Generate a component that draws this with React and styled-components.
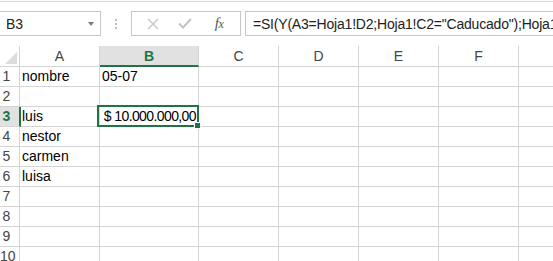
import React from "react";
import styled, { createGlobalStyle } from "styled-components";

const GRID = "#d4d4d4";
const GREEN = "#217346";
const BOX = "#c6c6c6";

const Global = createGlobalStyle`
  html, body { margin: 0; padding: 0; background: #fff; }
  body { font-family: "Liberation Sans", Arial, sans-serif; overflow: hidden; }
`;

const Window = styled.div`
  width: 553px;
  height: 261px;
  overflow: hidden;
  padding-top: 1px;
  box-sizing: border-box;
  background: #fff;
`;

const FormulaBar = styled.div`
  display: flex;
  align-items: stretch;
  border-top: 1px solid #d5d5d5;
  padding-top: 9px;
  height: 25px;
`;

const NameBox = styled.div`
  width: 101px;
  box-sizing: border-box;
  border: 1px solid ${BOX};
  border-left: none;
  display: flex;
  align-items: center;
  justify-content: space-between;
  padding: 0 6px 0 6px;
  font-size: 14px;
  color: #222;
`;

const Caret = styled.span`
  width: 0;
  height: 0;
  border-left: 3.5px solid transparent;
  border-right: 3.5px solid transparent;
  border-top: 4px solid #7a7a7a;
  margin-top: 1px;
`;

const Grip = styled.div`
  width: 30px;
  display: flex;
  flex-direction: column;
  align-items: center;
  justify-content: center;
  gap: 2px;
`;

const Dot = styled.span`
  width: 2px;
  height: 2px;
  background: #b8b8b8;
`;

const ButtonGroup = styled.div`
  width: 110px;
  box-sizing: border-box;
  border: 1px solid ${BOX};
  display: flex;
  align-items: center;
  padding-left: 14px;
  gap: 19px;
`;

const IconSlot = styled.span`
  display: flex;
  align-items: center;
  justify-content: center;
  width: ${(p) => p.$w || 13}px;
  height: 14px;
`;

const Fx = styled.span`
  font-family: "Liberation Serif", "Times New Roman", serif;
  font-style: italic;
  color: #555;
  font-size: 15px;
  letter-spacing: -0.5px;
  line-height: 1;
  sub {
    font-size: 12px;
    vertical-align: baseline;
  }
`;

const FormulaInput = styled.div`
  flex: 1;
  margin-left: 4px;
  border: 1px solid ${BOX};
  border-right: none;
  display: flex;
  align-items: center;
  padding-left: 7px;
  font-size: 14px;
  letter-spacing: -0.2px;
  color: #222;
  white-space: nowrap;
  overflow: hidden;
`;

const Sheet = styled.div`
  margin-top: 10px;
  display: grid;
  grid-template-columns: 20px 80px 99px 80px 80px 80px 80px 80px;
  grid-template-rows: 21px repeat(10, 20px);
  width: max-content;
`;

const Corner = styled.div`
  box-sizing: border-box;
  border-right: 1px solid ${GRID};
  border-bottom: 1px solid ${GRID};
  display: flex;
  align-items: flex-end;
  justify-content: flex-end;
  padding: 0 2px 2px 0;
`;

const ColHead = styled.div`
  box-sizing: border-box;
  border-right: 1px solid ${GRID};
  border-bottom: ${(p) => (p.$active ? `2px solid ${GREEN}` : `1px solid ${GRID}`)};
  background: ${(p) => (p.$active ? "#e1e1e1" : "#fff")};
  color: ${(p) => (p.$active ? GREEN : "#444")};
  font-weight: ${(p) => (p.$active ? 700 : 400)};
  font-size: 14px;
  display: flex;
  align-items: center;
  justify-content: center;
  padding-top: ${(p) => (p.$active ? 1 : 0)}px;
`;

const RowHead = styled.div`
  box-sizing: border-box;
  border-right: ${(p) => (p.$active ? `2px solid ${GREEN}` : `1px solid ${GRID}`)};
  border-bottom: 1px solid ${GRID};
  background: ${(p) => (p.$active ? "#e1e1e1" : "#fff")};
  color: ${(p) => (p.$active ? GREEN : "#444")};
  font-weight: ${(p) => (p.$active ? 700 : 400)};
  font-size: 14px;
  line-height: 19px;
  text-align: center;
  padding-right: 6px;
  margin-right: ${(p) => (p.$active ? -1 : 0)}px;
  position: relative;
  z-index: ${(p) => (p.$active ? 2 : 0)};
`;

const Cell = styled.div`
  box-sizing: border-box;
  border-right: 1px solid ${GRID};
  border-bottom: 1px solid ${GRID};
  font-size: 14px;
  color: #000;
  line-height: 19px;
  padding: 0 2px;
  white-space: nowrap;
  overflow: visible;
  text-align: ${(p) => (p.$right ? "right" : "left")};
  letter-spacing: ${(p) => (p.$tight ? "-0.6px" : "normal")};
  position: ${(p) => (p.$selected ? "relative" : "static")};
  z-index: ${(p) => (p.$selected ? 3 : 0)};
`;

const Selection = styled.span`
  position: absolute;
  left: -3px;
  top: -2px;
  right: -1px;
  bottom: -1px;
  border: 2px solid ${GREEN};
  pointer-events: none;
`;

const Handle = styled.span`
  position: absolute;
  right: -4px;
  bottom: -4px;
  width: 5px;
  height: 5px;
  background: ${GREEN};
  border: 1px solid #fff;
`;

const cols = ["A", "B", "C", "D", "E", "F", "G"];
const data = {
  1: { A: "nombre", B: "05-07" },
  3: { A: "luis" },
  4: { A: "nestor" },
  5: { A: "carmen" },
  6: { A: "luisa" },
};

export default function App() {
  const rows = [];
  for (let r = 1; r <= 10; r++) {
    rows.push(
      <RowHead key={`h${r}`} $active={r === 3}>
        {r}
      </RowHead>
    );
    cols.forEach((c) => {
      const selected = r === 3 && c === "B";
      rows.push(
        <Cell key={`${c}${r}`} $selected={selected} $right={selected} $tight={selected}>
          {selected ? "$ 10.000.000,00" : (data[r] && data[r][c]) || ""}
          {selected && (
            <Selection>
              <Handle />
            </Selection>
          )}
        </Cell>
      );
    });
  }

  return (
    <>
      <Global />
      <Window>
        <FormulaBar>
          <NameBox>
            <span>B3</span>
            <Caret />
          </NameBox>
          <Grip>
            <Dot />
            <Dot />
            <Dot />
          </Grip>
          <ButtonGroup>
            <IconSlot>
              <svg width="12" height="12" viewBox="0 0 12 12">
                <path d="M1 1 L11 11 M11 1 L1 11" stroke="#c4c4c4" strokeWidth="1.3" fill="none" />
              </svg>
            </IconSlot>
            <IconSlot $w={14}>
              <svg width="14" height="11" viewBox="0 0 14 11">
                <path d="M1 5.5 L5 9.5 L13 1" stroke="#c4c4c4" strokeWidth="2" fill="none" />
              </svg>
            </IconSlot>
            <IconSlot $w={16}>
              <Fx>
                f<sub>x</sub>
              </Fx>
            </IconSlot>
          </ButtonGroup>
          <FormulaInput>
            =SI(Y(A3=Hoja1!D2;Hoja1!C2="Caducado");Hoja1!B2;"")
          </FormulaInput>
        </FormulaBar>
        <Sheet>
          <Corner>
            <svg width="12" height="12" viewBox="0 0 12 12">
              <path d="M12 0 L12 12 L0 12 Z" fill="#dcdcdc" />
            </svg>
          </Corner>
          {cols.map((c) => (
            <ColHead key={c} $active={c === "B"}>
              {c}
            </ColHead>
          ))}
          {rows}
        </Sheet>
      </Window>
    </>
  );
}
